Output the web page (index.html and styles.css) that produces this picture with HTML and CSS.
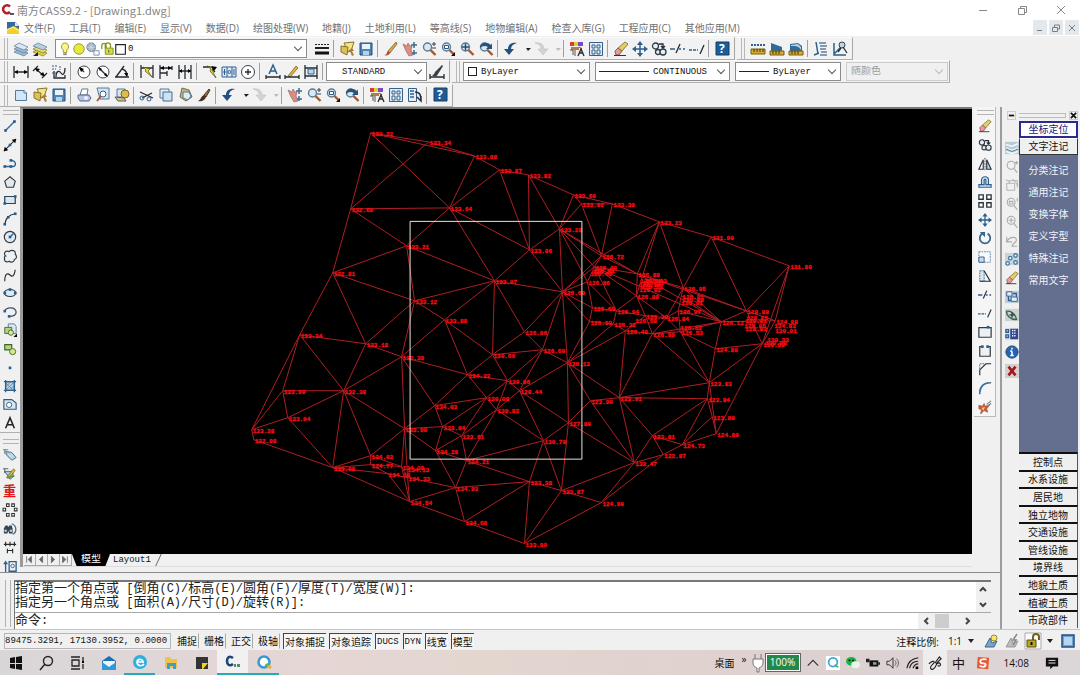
FILE: index.html
```html
<!DOCTYPE html>
<html lang="zh-CN">
<head>
    <meta charset="UTF-8">
    <meta name="viewport" content="width=device-width, initial-scale=1.0">
    <title>南方CASS9.2 - [Drawing1.dwg]</title>
    <link rel="stylesheet" href="styles.css">
</head>
<body>
    <div class="app">
        <header class="titlebar">
            <svg class="logo" viewBox="0 0 14 14"><path d="M9 3.5A4 4 0 1 0 9 9" fill="none" stroke="#b3202a" stroke-width="2.6"/><path d="M9 10h4v2H9z" fill="#556"/></svg>
            <span class="title">南方CASS9.2 - [Drawing1.dwg]</span>
            <div class="window-buttons">
                <button aria-label="最小化"><svg viewBox="0 0 10 10"><path d="M1 5.5h8"/></svg></button>
                <button aria-label="还原"><svg viewBox="0 0 10 10"><path d="M1.5 3.5h6v6h-6zM3.5 3.5v-2h6v6h-2"/></svg></button>
                <button aria-label="关闭"><svg viewBox="0 0 10 10"><path d="M1 1l8 8M9 1L1 9"/></svg></button>
            </div>
        </header>

        <nav class="menubar">
            <svg class="doc-icon" viewBox="0 0 14 14"><path d="M1 1h8l4 4v8H1z" fill="#f3cf2c"/><path d="M1 1h8l4 4v3L8 5 1 8z" fill="#2d6ca5"/><path d="M9 1v4h4z" fill="#dfeaf5"/><path d="M1 9l6-3 6 4" fill="none" stroke="#fff6b0"/></svg>
            <button>文件(F)</button>
            <button>工具(T)</button>
            <button>编辑(E)</button>
            <button>显示(V)</button>
            <button>数据(D)</button>
            <button>绘图处理(W)</button>
            <button>地籍(J)</button>
            <button>土地利用(L)</button>
            <button>等高线(S)</button>
            <button>地物编辑(A)</button>
            <button>检查入库(G)</button>
            <button>工程应用(C)</button>
            <button>其他应用(M)</button>
            <div class="doc-buttons">
                <button aria-label="最小化文档"><svg viewBox="0 0 10 10"><path d="M2 7.5h5"/></svg></button>
                <button aria-label="还原文档"><svg viewBox="0 0 10 10"><path d="M1.5 4.5h5v4h-5zM3.5 4v-2h5v4H7"/></svg></button>
                <button aria-label="关闭文档"><svg viewBox="0 0 10 10"><path d="M2 2l6 6M8 2L2 8"/></svg></button>
            </div>
        </nav>

        <section class="toolbars">
            <div class="toolbar-row">
                <div class="toolbar">
                    <div class="tools" data-icons="layers layerPrev"></div>
                    <label class="combo layer-combo">
                        <span class="layer-state" data-icons="bulb sun freeze unlock swatch"></span>
                        <select aria-label="图层"><option>0</option></select>
                    </label>
                    <div class="tools" data-icons="lineweight | open save | brush pan zoomRt zoomWin zoomAll zoomPrev | undo drop redo dropOff | props palette | erase move copy break1 break2 | help"></div>
                </div>
                <div class="toolbar">
                    <div class="tools" data-icons="dist area volume | list locate"></div>
                </div>
            </div>
            <div class="toolbar-row">
                <div class="toolbar">
                    <div class="tools" data-icons="dimLin dimAli dimOrd | dimRad dimDia dimAng | dimQuick dimBase dimCont | leader tolerance center | dimText dimEdit dimUpd |"></div>
                    <label class="combo style-combo"><select aria-label="标注样式"><option>STANDARD</option></select></label>
                    <div class="tools" data-icons="dimStyle"></div>
                </div>
                <div class="toolbar props-bar">
                    <label class="combo color-combo"><span class="swatch"></span><select aria-label="颜色"><option>ByLayer</option></select></label>
                    <label class="combo type-combo"><span class="rule rule-long"></span><select aria-label="线型"><option>CONTINUOUS</option></select></label>
                    <label class="combo weight-combo"><span class="rule"></span><select aria-label="线宽"><option>ByLayer</option></select></label>
                    <label class="combo plot-combo"><select aria-label="打印样式" disabled><option>随颜色</option></select></label>
                </div>
            </div>
            <div class="toolbar-row">
                <div class="toolbar">
                    <div class="tools" data-icons="new open save | print preview publish | cut copyClip paste match | undo drop redo dropOff | pan zoomRt zoomWin zoomPrev | props palette sheet | help"></div>
                </div>
            </div>
        </section>

        <main class="workspace">
            <div class="desk">
                <div class="drawing-row">
                    <aside class="draw-tools">
                        <div class="grip"></div>
                        <div class="tools vertical draw" data-icons="line xline pline polygon rect arc circle cloud spline ellipse ellArc insert block point hatch region text"></div>
                        <div class="grip"></div>
                        <div class="tools vertical cass" data-icons="tag tagEdit rebuild nodes find width attr"></div>
                    </aside>
                    <div class="drawing">
                        <svg class="canvas" id="canvas" viewBox="23 109 950 445" preserveAspectRatio="xMinYMin meet" role="img" aria-label="三角网"></svg>
                        <div class="sheet-tabs">
                            <button class="nav" aria-label="第一个"><svg viewBox="0 0 10 10"><path d="M2 1v8M8 1L4 5l4 4z"/></svg></button>
                            <button class="nav" aria-label="上一个"><svg viewBox="0 0 10 10"><path d="M7 1L3 5l4 4z"/></svg></button>
                            <button class="nav" aria-label="下一个"><svg viewBox="0 0 10 10"><path d="M3 1l4 4-4 4z"/></svg></button>
                            <button class="nav" aria-label="最后一个"><svg viewBox="0 0 10 10"><path d="M8 1v8M2 1l4 4-4 4z"/></svg></button>
                            <button class="sheet active">模型</button>
                            <button class="sheet">Layout1</button>
                            <span class="slash"></span>
                        </div>
                    </div>
                    <aside class="modify-tools">
                        <div class="modify-box">
                            <div class="grip"></div>
                            <div class="tools vertical modify" data-icons="erase copy mirror offset array move rotate scale stretch break1 break2 breakPt breakGap chamfer fillet explode"></div>
                        </div>
                    </aside>
                </div>

                <section class="command">
                    <div class="command-grip"></div>
                    <div class="command-box">
                        <div class="history">
                            <div class="history-text">
                                <p>指定第一个角点或<span> [</span>倒角<span>(C)/</span>标高<span>(E)/</span>圆角<span>(F)/</span>厚度<span>(T)/</span>宽度<span>(W)]:</span></p>
                                <p>指定另一个角点或<span> [</span>面积<span>(A)/</span>尺寸<span>(D)/</span>旋转<span>(R)]:</span></p>
                            </div>
                            <div class="scroll-v">
                                <svg viewBox="0 0 8 6"><path d="M1 5l3-3 3 3"/></svg>
                                <svg viewBox="0 0 8 6"><path d="M1 1l3 3 3-3"/></svg>
                            </div>
                        </div>
                        <div class="prompt">
                            <label for="cmd">命令<span>:</span></label>
                            <input id="cmd" type="text">
                            <div class="scroll-h">
                                <svg viewBox="0 0 6 8"><path d="M5 1L2 4l3 3"/></svg>
                                <span class="thumb"></span>
                                <svg viewBox="0 0 6 8"><path d="M1 1l3 3-3 3"/></svg>
                            </div>
                        </div>
                    </div>
                </section>
            </div>

            <aside class="side">
                <div class="side-head">
                    <button aria-label="折叠"><svg viewBox="0 0 8 8"><path d="M1 4h6"/></svg></button>
                    <span class="side-grip"></span>
                    <button aria-label="关闭面板"><svg viewBox="0 0 8 8"><path d="M1 1l6 6M7 1L1 7"/></svg></button>
                </div>
                <div class="side-body">
                    <div class="tools vertical snaps" data-icons="sLayer sZoom sWin sZoom2 sPlus sUndo sNodes erase sBlock sEdit sTable info close"></div>
                    <div class="side-menu">
                        <button class="head current">坐标定位</button>
                        <button class="head">文字注记</button>
                        <div class="sub">
                            <button>分类注记</button>
                            <button>通用注记</button>
                            <button>变换字体</button>
                            <button>定义字型</button>
                            <button>特殊注记</button>
                            <button>常用文字</button>
                        </div>
                        <div class="groups">
                            <button>控制点</button>
                            <button>水系设施</button>
                            <button>居民地</button>
                            <button>独立地物</button>
                            <button>交通设施</button>
                            <button>管线设施</button>
                            <button>境界线</button>
                            <button>地貌土质</button>
                            <button>植被土质</button>
                            <button>市政部件</button>
                        </div>
                    </div>
                </div>
            </aside>
        </main>

        <footer class="status">
            <span class="coords">89475.3291, 17130.3952, 0.0000</span>
            <div class="modes">
                <button>捕捉</button>
                <button>栅格</button>
                <button>正交</button>
                <button>极轴</button>
                <button class="on">对象捕捉</button>
                <button class="on">对象追踪</button>
                <button class="on latin">DUCS</button>
                <button class="on latin">DYN</button>
                <button class="on">线宽</button>
                <button class="on">模型</button>
            </div>
            <div class="status-right">
                <span>注释比例:</span>
                <button class="scale-btn">1:1 <i class="caret"></i></button>
                <div class="tools status-icons" data-icons="annoVis annoAuto lock"></div>
                <i class="caret"></i>
                <div class="tools" data-icons="clean"></div>
            </div>
        </footer>

        <div class="taskbar">
            <div class="tasks" data-icons="win search taskview mail browser folder note cass qq"></div>
            <div class="tray">
                <span class="desktop">桌面</span>
                <span class="more">»</span>
                <svg class="plug" viewBox="0 0 12 20"><path d="M3 1v5M9 1v5M1 6h10v4c0 3-2 4-4 5v4H5v-4c-2-1-4-2-4-5z" fill="#fff" stroke="#777"/></svg>
                <span class="battery">100%</span>
                <div class="tray-icons" data-icons="up qqTray wechat power speaker wifi pen"></div>
                <span class="ime">中</span>
                <div class="tray-icons" data-icons="sogou"></div>
                <time>14:08</time>
                <div class="tray-icons" data-icons="notice"></div>
            </div>
        </div>
    </div>
    <script src="script.js"></script>
</body>
</html>
```

FILE: styles.css
```css
* {
    margin: 0;
    padding: 0;
    box-sizing: border-box;
}

body {
    font-family: "Open Sans", "Noto Sans CJK SC", sans-serif;
    font-size: 10px;
    color: #222;
    background: #f0f0f0;
    overflow: hidden;
}

button,
select,
input {
    font: inherit;
    color: inherit;
    border: 0;
    background: none;
    white-space: nowrap;
}

svg {
    display: block;
}

.app {
    display: flex;
    flex-direction: column;
    height: 100vh;
}

/* title and menu */
.titlebar {
    display: flex;
    align-items: center;
    height: 19px;
    padding-left: 1px;
    background: #fff;
    color: #858585;
}

.logo {
    width: 14px;
    height: 14px;
    margin-right: 2px;
}

.title {
    font-family: "Noto Sans CJK SC", sans-serif;
    font-size: 11px;
    line-height: 18px;
}

.window-buttons {
    display: flex;
    margin-left: auto;
}

.window-buttons button {
    display: grid;
    place-items: center;
    width: 39px;
    height: 19px;
}

.window-buttons svg,
.doc-buttons svg {
    width: 10px;
    height: 10px;
    fill: none;
    stroke: #888;
}

.menubar {
    display: flex;
    align-items: center;
    gap: 14px;
    height: 17px;
    padding-left: 6px;
    background: #fff;
    color: #707070;
}

.menubar > button {
    line-height: 16px;
}

.doc-icon {
    width: 14px;
    height: 14px;
    margin-right: -10px;
}

.doc-buttons {
    display: flex;
    gap: 2px;
    margin-left: auto;
    padding-right: 1px;
}

.doc-buttons button {
    display: grid;
    place-items: center;
    width: 14px;
    height: 15px;
    background: #e4e8eb;
}

.doc-buttons svg {
    stroke: #71808c;
}

/* toolbars */
.toolbars {
    display: flex;
    flex-direction: column;
    height: 71px;
    padding-top: 1px;
}

.toolbar-row {
    display: flex;
    gap: 2px;
    height: 24px;
}

.toolbar {
    display: flex;
    align-items: center;
    height: 23px;
    padding: 0 3px 0 11px;
    border-right: 1px solid #a6a6a6;
    border-bottom: 1px solid #b0b0b0;
    border-top: 1px solid #fafafa;
    background: linear-gradient(#b8b8b8, #b8b8b8) 4px 0 / 1px 100% no-repeat,
        linear-gradient(#b8b8b8, #b8b8b8) 7px 0 / 1px 100% no-repeat, #f2f2f2;
}

.props-bar {
    padding-right: 1px;
}

.tools {
    display: flex;
    align-items: center;
}

.tool {
    display: grid;
    place-items: center;
    width: 19px;
    height: 19px;
}

.tool svg {
    width: 16px;
    height: 16px;
    overflow: visible;
}

.tool.narrow {
    width: 11px;
}

.sep {
    width: 1px;
    height: 17px;
    margin: 0 3px 0 2px;
    background: #a0a0a0;
}

.combo {
    position: relative;
    display: flex;
    align-items: center;
    height: 19px;
    border: 1px solid #8c8c8c;
    background: #fff;
    font-family: "Liberation Mono", "Noto Sans CJK SC", monospace;
    font-size: 9px;
    color: #111;
}

.combo select {
    flex: 1;
    min-width: 0;
    height: 17px;
    padding-left: 4px;
    appearance: none;
    outline: 0;
}

.combo::after {
    content: "";
    position: absolute;
    right: 5px;
    top: 4px;
    width: 5px;
    height: 5px;
    border: solid #555;
    border-width: 0 1px 1px 0;
    transform: rotate(45deg);
}

.layer-combo {
    width: 252px;
    margin: 0 5px 0 6px;
    padding-left: 2px;
}

.layer-combo select {
    padding-left: 0;
}

.layer-state {
    display: flex;
}

.layer-state svg {
    width: 14px;
    height: 14px;
}

.style-combo {
    width: 101px;
}

.style-combo select {
    padding-left: 15px;
}

.color-combo {
    width: 127px;
    padding-left: 4px;
}

.type-combo,
.weight-combo,
.plot-combo {
    margin-left: 5px;
}

.type-combo {
    width: 135px;
}

.weight-combo {
    width: 106px;
}

.plot-combo {
    width: 102px;
    border-color: #ccc;
    background: #f0f0f0;
    font-size: 10px;
    color: #777;
}

.plot-combo::after {
    border-color: #bbb;
}

.swatch {
    width: 9px;
    height: 9px;
    border: 1px solid #222;
}

.rule {
    width: 30px;
    height: 1px;
    margin-left: 3px;
    background: #222;
}

.rule-long {
    width: 50px;
}

/* workspace */
.workspace {
    display: flex;
    flex: 1;
    min-height: 0;
}

.desk {
    display: flex;
    flex: 1;
    flex-direction: column;
    min-width: 0;
}

.drawing-row {
    display: flex;
    flex: 1;
    min-height: 0;
    border-bottom: 1px solid #8a8a8a;
}

.draw-tools {
    width: 20px;
    padding-top: 3px;
    overflow: hidden;
}

.grip {
    height: 5px;
    margin: 0 1px 2px 3px;
    border: solid #b4b4b4;
    border-width: 1px 0;
}

.vertical {
    flex-direction: column;
}

.vertical .tool {
    flex: 1;
    min-height: 0;
}

.vertical .tool svg {
    width: 14px;
    height: 14px;
}

.draw {
    height: 316px;
    margin-bottom: 6px;
    border-bottom: 1px solid #b0b0b0;
}

.cass {
    height: 129px;
}

.drawing {
    display: flex;
    flex: 1;
    flex-direction: column;
    min-width: 0;
    border-left: 3px solid #9a9a9a;
    border-top: 2px solid #777;
    margin-bottom: 5px;
}

.canvas {
    flex: 1;
    width: 100%;
    min-height: 0;
    background: #000;
}

.mesh {
    fill: none;
    stroke: #b01e22;
    stroke-width: 1;
}

.window-box {
    fill: none;
    stroke: #e8e4dc;
    stroke-width: 1;
}

.labels {
    font-family: "Liberation Mono", monospace;
    font-size: 6px;
    font-weight: bold;
    fill: #ff0a10;
    stroke: #f40d12;
    stroke-width: 0.3;
}

.sheet-tabs {
    display: flex;
    height: 13px;
    padding-left: 1px;
    border-bottom: 1px solid #ddd;
}

.nav {
    width: 12px;
    height: 12px;
    padding: 1px;
    border: solid #aaa;
    border-width: 0 1px 1px 0;
}

.nav svg {
    width: 8px;
    height: 9px;
    fill: #666;
    stroke: #666;
}

.sheet {
    padding: 0 3px;
    font-family: "Liberation Mono", "Noto Sans CJK SC", monospace;
    font-size: 9px;
    line-height: 12px;
    color: #111;
}

.sheet.active {
    width: 38px;
    background: #000;
    color: #fff;
    font-size: 10px;
    clip-path: polygon(0 0, 100% 0, 88% 100%, 12% 100%);
}

.slash {
    width: 1px;
    height: 12px;
    margin-left: 4px;
    background: #666;
    transform: skewX(-25deg);
}

.modify-tools {
    width: 28px;
    padding: 0 4px 0 2px;
}

.modify-box {
    padding-top: 3px;
    border: solid #b8b8b8;
    border-width: 0 1px 1px 0;
    background: #f5f5f5;
}

.modify {
    height: 299px;
}

/* command line */
.command {
    display: flex;
    height: 56px;
    padding: 7px 9px 0 5px;
    font-family: "Liberation Mono", "Noto Sans CJK SC", monospace;
    color: #222;
}

.command-grip {
    width: 6px;
    height: 47px;
    margin-right: 3px;
    border: solid #b0b0b0;
    border-width: 0 1px;
}

.command-box {
    display: flex;
    flex: 1;
    flex-direction: column;
    min-width: 0;
    border: solid #777;
    border-width: 2px 0 0 1px;
    background: #fff;
}

.history {
    display: flex;
    flex: 1;
    justify-content: space-between;
    border-bottom: 1px solid #a8a8a8;
}

.history p,
.prompt label {
    font-size: 13px;
    line-height: 14px;
    white-space: nowrap;
}

.history span,
.prompt label span {
    font-size: 12px;
}

.scroll-v {
    display: flex;
    flex-direction: column;
    justify-content: space-between;
    width: 15px;
    padding: 4px 3px;
    background: #f0f0f0;
}

.scroll-v svg {
    width: 8px;
    height: 6px;
}

.scroll-v svg,
.scroll-h svg {
    fill: none;
    stroke: #444;
    stroke-width: 2;
}

.prompt {
    display: flex;
    align-items: center;
    height: 16px;
}

.prompt input {
    flex: 1;
    min-width: 0;
    height: 14px;
    padding-left: 4px;
    font-size: 12px;
    outline: 0;
}

.scroll-h {
    display: flex;
    align-items: center;
    gap: 6px;
    width: 73px;
    height: 16px;
    padding-left: 5px;
    background: #f0f0f0;
}

.scroll-h svg {
    width: 6px;
    height: 8px;
}

.thumb {
    width: 14px;
    height: 14px;
    margin-right: 10px;
    background: #cdcdcd;
}

/* side palette */
.side {
    display: flex;
    flex-direction: column;
    width: 80px;
    padding: 2px 2px 1px 2px;
    border-left: 2px solid #9c9c9c;
}

.side-head {
    display: flex;
    align-items: center;
    gap: 3px;
    height: 12px;
    padding: 0 0 0 3px;
}

.side-head button {
    width: 9px;
    height: 9px;
    border: 1px solid #ccc;
}

.side-head svg {
    width: 7px;
    height: 7px;
    stroke: #111;
    stroke-width: 2;
}

.side-grip {
    flex: 1;
    height: 5px;
    border: 1px solid #bbb;
    border-left: 0;
}

.side-body {
    display: flex;
    flex: 1;
    min-height: 0;
}

.snaps {
    width: 15px;
    height: 241px;
    margin-top: 18px;
    background: #f0f0f0;
}

.side-menu {
    display: flex;
    flex: 1;
    flex-direction: column;
    background: linear-gradient(#f0f0f0, #f0f0f0) 0 0 / 100% 17px no-repeat, #646f90;
}

.side-menu .head {
    height: 17px;
    border: 1px solid #333;
    border-top-color: #fff;
    background: #efefef;
    color: #111;
    line-height: 15px;
}

.side-menu .current {
    border: 2px solid #2b2a92;
    background: #fff;
    color: #17167c;
    line-height: 13px;
}

.sub {
    display: flex;
    flex: 1;
    flex-direction: column;
    padding-top: 3px;
}

.sub button {
    height: 22px;
    color: #f3f4f8;
}

.groups {
    display: flex;
    flex-direction: column;
    height: 176px;
}

.groups button {
    flex: 1;
    min-height: 0;
    border-top: 2px solid #111;
    border-right: 1px solid #555;
    background: #efefef;
    color: #111;
    line-height: 14px;
}

/* status bar */
.status {
    display: flex;
    align-items: center;
    height: 21px;
    padding: 2px 3px 0 4px;
    border-top: 1px solid #c6c6c6;
    color: #111;
}

.coords {
    width: 167px;
    height: 16px;
    border: 1px solid #b5b5b5;
    font-family: "Liberation Mono", monospace;
    font-size: 9px;
    line-height: 14px;
    white-space: nowrap;
}

.modes {
    display: flex;
    gap: 3px;
    padding-left: 4px;
}

.modes button {
    height: 16px;
    padding: 0 1px;
    border: 1px solid #f0f0f0;
    border-right-color: #aaa;
    line-height: 14px;
}

.modes .on {
    border: solid #444;
    border-width: 1px 0 0 1px;
    background: #f6f6f6;
}

.modes .latin {
    font-family: "Liberation Mono", monospace;
    font-size: 9px;
}

.status-right {
    display: flex;
    align-items: center;
    gap: 5px;
    margin-left: auto;
}

.scale-btn {
    display: flex;
    align-items: center;
    gap: 6px;
    margin-left: 4px;
}

.caret {
    border: 3px solid transparent;
    border-top: 4px solid #222;
    border-bottom: 0;
}

.status-icons {
    gap: 2px;
    margin-left: 2px;
}

/* taskbar */
.taskbar {
    display: flex;
    align-items: stretch;
    justify-content: space-between;
    height: 25px;
    background: linear-gradient(90deg, #d9d6d8, #e6d6d6 28%, #e3d6cf 45%, #ddd0d0 75%, #dcd6d8);
}

.tasks {
    display: flex;
}

.task {
    display: grid;
    place-items: center;
    width: 31px;
}

.task svg {
    width: 16px;
    height: 16px;
}

.task.running {
    border-bottom: 2px solid #28a9b8;
}

.task.focused {
    background: #f3f0f1;
}

.tray {
    display: flex;
    align-items: center;
    padding-right: 18px;
    color: #111;
}

.desktop {
    margin-right: 7px;
}

.more {
    height: 22px;
    margin-right: 5px;
    line-height: 14px;
}

.plug {
    width: 12px;
    height: 20px;
    margin-right: 1px;
}

.battery {
    width: 36px;
    height: 19px;
    margin-right: 2px;
    border: 2px solid #fff;
    outline: 1px solid #666;
    outline-offset: -1px;
    background: #23884a;
    color: #fff;
    line-height: 15px;
    text-align: center;
}

.tray-icons {
    display: flex;
    align-items: center;
}

.tray-icons .tray-item {
    display: grid;
    place-items: center;
    width: 20px;
    height: 25px;
}

.tray-icons .wide {
    width: 24px;
}

.tray-icons .lit {
    background: #efecee;
}

.tray-icons svg {
    width: 14px;
    height: 14px;
}

.ime {
    width: 24px;
    font-size: 13px;
    line-height: 20px;
    text-align: center;
}

.tray time {
    margin: 0 13px 0 9px;
}
```

FILE: script.js
```js
// Icon shapes, all on a 16 x 16 grid
const sheetShape = '<path d="M2.5 3.5h9l2 2v8h-11z" fill="#d4e6f3" stroke="#55799a"/>';
const lens = '<circle cx="6.5" cy="6" r="4" fill="#d9e9f4" stroke="#5b7b96" stroke-width="1.4"/><path d="M9.5 9l5 5" stroke="#a8572c" stroke-width="2.4"/>';
const greyLens = '<g fill="none" stroke="#aaa" stroke-width="1.2"><circle cx="7" cy="6" r="4.5"/><path d="M10 9.5l4 5"/>';
const pencil = '<path d="M4 12l8-10 2 2-8 9z" fill="#e0b43a" stroke="#74521c" stroke-width=".7"/>';
const k = (d) => `<path d="${d}" fill="none" stroke="#262b30" stroke-width="1.3"/>`;
const b = (d) => `<path d="${d}" fill="none" stroke="#2c608f" stroke-width="1.5"/>`;
const dots = (list) => list.map(([x, y]) => `<rect x="${x - 1.5}" y="${y - 1.5}" width="3" height="3" fill="#255d92"/>`).join('');

const icons = {
    layers: '<g fill="#9db8d4" stroke="#5a7b9c" stroke-width=".7"><path d="M1 11l5-3 9 4-4 3z"/><path d="M1 8l5-3 9 4-4 3z"/><path d="M1 5l5-3 9 4-4 3z" fill="#dbe8f3"/></g>',
    layerPrev: '<g stroke-width=".7"><path d="M1 11l5-3 9 4-4 3z" fill="#dfcf4e" stroke="#837520"/><path d="M1 8l5-3 9 4-4 3z" fill="#e8db6d" stroke="#837520"/><path d="M1 5l5-3 9 4-4 3z" fill="#b8cfe2" stroke="#5a7b9c"/></g><path d="M1 15l5-4v4z" fill="#222"/>',
    bulb: '<path d="M8 1a4.3 4.3 0 0 0-2 8v3h4V9a4.3 4.3 0 0 0-2-8z" fill="#fbf48a" stroke="#998e28"/><path d="M6 13h4v2H6z" fill="#7a8590"/>',
    sun: '<circle cx="8" cy="8" r="6" fill="#e6ea3b" stroke="#8d9122"/>',
    freeze: '<circle cx="6" cy="6" r="5" fill="#9db1c4" stroke="#667d92"/><path d="M3 3l6 6M9 3L3 9M6 1v10M1 6h10" stroke="#dfe8ef" stroke-width=".7"/><path d="M9 10h6v5H9z" fill="#fff" stroke="#6c86a0"/>',
    unlock: '<path d="M2 8V4a2 2 0 0 1 5 0v3M6 7V4a3 3 0 0 1 6 0v3" fill="none" stroke="#85951d" stroke-width="1.5"/><path d="M6 7h9v7H6z" fill="#d3df3f" stroke="#7d8a1a"/><path d="M10 9v3" stroke="#444"/>',
    swatch: '<path d="M2 3h11v11H2z" fill="#fff" stroke="#222" stroke-width="1.3"/>',
    lineweight: '<path d="M1 3.5h14" stroke="#222" stroke-dasharray="2 1"/><path d="M1 7h14" stroke="#222" stroke-width="2"/><path d="M1 12h14" stroke="#111" stroke-width="3"/>',
    new: sheetShape + '<path d="M11 3v3h3" fill="#fff" stroke="#55799a"/>',
    open: '<path d="M5 2l10-1-3 9-3 1z" fill="#f3e38a" stroke="#8c7426"/><path d="M2 5l7 1-1 8-6-3z" fill="#dcc05a" stroke="#8c7426"/><path d="M13 7l-4 3h2l2 5 2-1-2-4h2z" fill="#a77f38"/>',
    save: '<path d="M2 2h12v12H2z" fill="#4c86b6" stroke="#234e77"/><path d="M4 3h8v5H4z" fill="#e8f2f8"/><path d="M5 10h6v4H5z" fill="#b8d1e4"/>',
    brush: '<path d="M5 10l8-9 1 2-7 9z" fill="#d9a443" stroke="#7e561f" stroke-width=".7"/><path d="M1 14c4 0 2-3 4-4l2 2c-1 2-3 3-6 2z" fill="#b5492e"/>',
    pan: '<path d="M1 3l4 2 1-3 2 3 2 0-1 4 2 5-4 1-3-5z" fill="#d98d85" stroke="#9c6763" stroke-width=".7"/><path d="M12 1v6M9 4h6M12 9v5M10 12h5" stroke="#3a6d8e" stroke-width="1.5"/>',
    zoomRt: lens + '<path d="M13 1v4M11 3h4M11 7h4" stroke="#345"/>',
    zoomWin: lens + '<path d="M4.5 4.5h4v3h-4z" fill="#fff" stroke="#2d577d"/><path d="M15 11v4h-4z" fill="#111"/>',
    zoomAll: lens + '<path d="M6.5 2.5v7M3 6h7" stroke="#2d4b67" stroke-width="1.5"/>',
    zoomPrev: lens + '<path d="M2 7c0-5 6-7 11-3l1-2v6H8l2-2C7 4 4 5 2 7z" fill="#26547d"/>',
    undo: '<path d="M14 2C9 1 5 3 5 8H1l5 6 5-6H8c0-3 2-5 6-6z" fill="#24507d"/>',
    redo: '<path d="M2 2c5-1 9 1 9 6h4l-5 6-5-6h3c0-3-2-5-6-6z" fill="#d3d3d3" stroke="#bbb" stroke-width=".5"/>',
    drop: '<path d="M6 7h5L8 10z" fill="#222"/>',
    dropOff: '<path d="M6 7h5L8 10z" fill="#bbb"/>',
    props: '<path d="M1 1h4v4H1z" fill="#d23c3c"/><path d="M5 1h4v4H5z" fill="#e4cf31"/><path d="M9 1h5v4H9z" fill="#7a4ac0"/><path d="M2 6h8v3H2z" fill="#b87848"/><path d="M1 9h3v5M6 9v6M10 6l3 2" stroke="#555" fill="none"/>' + k('M9 15l3-7 3 7M10 12h4'),
    palette: '<path d="M1.5 1.5h13v13h-13z" fill="#e4edf5" stroke="#34608b"/><g fill="none" stroke="#34608b"><path d="M4 4h3v3H4zM9 4h3v3H9zM4 9h3v4H4zM9 9h3v4H9z"/></g>',
    sheet: '<path d="M1.5 1.5h8v13h-8z" fill="#e4edf5" stroke="#34608b"/><path d="M3 4h4M3 7h4M3 10h4" stroke="#34608b" stroke-width="1.5"/><path d="M8 5c5 0 6 3 6 9l-4-4M14 14V9" fill="none" stroke="#2a2f35" stroke-width="1.5"/>',
    erase: '<path d="M2 10l3-3 4 3-3 4H3z" fill="#e79b9b" stroke="#7a4544" stroke-width=".8"/><path d="M5 7l7-6 3 2-6 7z" fill="#e2cf65" stroke="#726229" stroke-width=".8"/><path d="M1 14.5h12" stroke="#333"/>',
    move: b('M8 2v12M2 8h12') + '<path d="M8 0l3 4H5zM8 16l3-4H5zM0 8l4-3v6zM16 8l-4-3v6z" fill="#2c608f"/>',
    copy: '<g fill="#e8eef3" stroke="#303b46" stroke-width="1.3"><circle cx="4.5" cy="5" r="3"/><circle cx="7" cy="11" r="2.5"/><circle cx="12" cy="11" r="3"/></g>' + k('M8 3h4v3M10 5l2 2 2-2'),
    break1: b('M0 8h5M9 8h2M13 8h2') + k('M6 12l4-9'),
    break2: '<path d="M0 9h9" stroke="#2c608f" stroke-width="1.5" stroke-dasharray="3 1"/>' + k('M11 13l4-9'),
    help: '<path d="M2 1h13v13H2z" fill="#1d5c96" stroke="#153e68"/><text x="5" y="12" font-size="12" font-weight="bold" fill="#fff">?</text>',
    dist: '<path d="M1 4h14" stroke="#315f91" stroke-width="2" stroke-dasharray="2 1"/><path d="M1 8h14v5H1z" fill="#d5ac2f" stroke="#765c16"/><path d="M4 8v3M7 8v3M10 8v3M13 8v3" stroke="#3d3110"/>',
    area: '<path d="M2 2l11 4v5H2z" fill="#2f6a9b"/><path d="M1 10h14v4H1z" fill="#d5ac2f" stroke="#765c16"/><path d="M4 10v3M7 10v3M10 10v3" stroke="#3d3110"/>',
    volume: '<path d="M2 3l8-1 4 3v6H2z" fill="#2f6a9b"/><path d="M3 4l7-1 3 3v3c-2-4-5-4-10-4z" fill="#b9d3e5"/><path d="M1 10h14v4H1z" fill="#d5ac2f" stroke="#765c16"/><path d="M4 10v3M7 10v3M10 10v3" stroke="#3d3110"/>',
    list: b('M3 1l2 12M1 14l5-2') + '<path d="M6 2h7M7 5h7M7 8h6M8 11h6M7 14h7" stroke="#5f7d9b" stroke-width="1.5"/>',
    locate: b('M2 2v12h12M2 13l8-8') + '<circle cx="10" cy="4" r="3" fill="#c0d6e6" stroke="#39444e"/>' + k('M11 6l4 6M9 7l-3 4'),
    dimLin: k('M1 2v12M15 2v12M2 8h12') + '<path d="M1 8l4-2v4zM15 8l-4-2v4z"/>',
    dimAli: k('M4 5l8 7M1 7l5-5M10 14l5-5') + '<path d="M3 4l5 1-3 3zM13 12l-5-1 3-3z"/>',
    dimOrd: k('M3 7v7h11v-3M5 13c0-6 3-7 5-4s4 1 4-5') + '<path d="M1 2h6M1 5h4M1 9h4M9 2v4" stroke="#315f91" stroke-dasharray="2 1"/>',
    dimRad: '<circle cx="8" cy="8" r="6" fill="#fff" stroke="#3b4248"/>' + k('M8 8L4 4') + '<path d="M3 3l5 2-3 3z"/>',
    dimDia: '<circle cx="8" cy="8" r="6" fill="#fff" stroke="#3b4248"/>' + k('M4 4l8 8') + '<path d="M3 3l4 2-2 2zM13 13l-4-2 2-2z"/>',
    dimAng: k('M1 13h14M2 13l8-11M8 5c4 1 5 4 5 7') + '<path d="M13 13l-3-4h4z"/>',
    dimQuick: k('M2 1v13M14 1v13M2 4h12') + '<path d="M4 3l7 2-2 2 4 6-7-6 1-1z" fill="#e5df26" stroke="#4e4b16" stroke-width=".7"/>',
    dimBase: k('M2 1v14M2 4h12M2 9h7M14 2v4M9 7v5') + '<path d="M2 4l4-2v4zM14 4l-4-2v4z"/>',
    dimCont: k('M2 1v14M8 1v14M14 1v14M2 7h12') + '<path d="M2 7l3-2v4zM14 7l-3-2v4z"/>',
    leader: k('M1 3h7l5 5') + '<path d="M5 2l6 2-1 2 4 8-6-7 1-2z" fill="#e5df26" stroke="#4e4b16" stroke-width=".7"/><path d="M15 3l-6-1 3 5z"/>',
    tolerance: '<path d="M1 3h14v10H1z" fill="#dfeaf4" stroke="#315f91"/><path d="M6 3v10M11 3v10M3.5 5v6M2 8h3" stroke="#315f91"/><circle cx="8.5" cy="8" r="1.5" fill="none" stroke="#315f91"/><path d="M13 5v6" stroke="#315f91"/>',
    center: '<circle cx="8" cy="8" r="6.5" fill="#fff" stroke="#3b4248"/>' + k('M8 5v6M5 8h6'),
    dimText: b('M4 10l4-9 4 9M5 7h6') + k('M1 11v4M15 11v4M1 13h14'),
    dimEdit: pencil + k('M1 11v4M15 11v4M1 13h14'),
    dimUpd: k('M2 1v14M14 1v14M2 12h12M2 4h12') + '<path d="M5 5h6v5H5z" fill="#c0d7e8" stroke="#2c608f"/>',
    dimStyle: '<path d="M3 11c3 0 2-3 4-4l6-6 1 1-5 8c-1 3-4 3-6 1z" fill="#3b3f42"/>' + k('M1 10v5M15 10v5M1 13h14'),
    print: '<path d="M4 8l2-6h6l-1 6z" fill="#fff" stroke="#66768c"/><path d="M2 8h11l2 3-2 3H4l-2-3z" fill="#b9c2df" stroke="#596789"/><circle cx="10" cy="11" r="2" fill="#eef"/>',
    preview: '<path d="M2 1h12v11H5z" fill="#d4e6f3" stroke="#55799a"/><circle cx="8" cy="7" r="3" fill="#fff" stroke="#3e6484"/><path d="M6 9l-4 5" stroke="#a8572c" stroke-width="2"/>',
    publish: '<path d="M3 2h8v8H3z" fill="#d4e6f3" stroke="#55799a"/><circle cx="11" cy="7" r="4" fill="#e0bd4a" stroke="#7e6420"/><path d="M1 10l9 1 2 3H4z" fill="#c9c1a3" stroke="#665c3a"/>',
    cut: k('M1 5l13 6M3 11l10-5') + '<circle cx="3" cy="11" r="2" fill="none" stroke="#2c608f"/><circle cx="10" cy="12" r="2" fill="none" stroke="#2c608f"/>',
    copyClip: '<path d="M2 2h9v9H2z" fill="#e2edf5" stroke="#55799a"/><path d="M5 5h9v9H5z" fill="#cfe2f0" stroke="#466d90"/>',
    paste: '<path d="M5 1l7 2 3 7-6 4-6-4z" fill="#c4b584" stroke="#7a6b40"/><path d="M6 5h6l2 4-3 4-5-2z" fill="#dfebf4" stroke="#55799a"/>',
    match: '<path d="M8 8l5-6 1 1-4 7z" fill="#8a6a48" stroke="#4e3a25"/><path d="M2 14c3-1 3-5 6-6l2 2c-1 3-4 5-8 4z" fill="#4a3020"/>',
    line: b('M2 14L14 2') + dots([[3, 13], [13, 3]]),
    xline: k('M1 15L15 1') + '<path d="M1 15l1-5 4 4zM15 1l-1 5-4-4z"/>' + dots([[8, 8]]),
    pline: b('M2 12h9c5 0 4-7-2-7') + dots([[2, 12], [9, 12], [9, 5]]),
    polygon: '<path d="M8 2l6 5-2 7H4L2 7z" fill="#e3e8ed" stroke="#333b43" stroke-width="1.3"/>',
    rect: '<path d="M2 4h12v8H2z" fill="#d9e7f2" stroke="#333f4b" stroke-width="1.4"/>' + dots([[2, 12], [14, 4]]),
    arc: k('M2 14C3 7 7 3 14 2') + dots([[2, 14], [6, 6], [14, 2]]),
    circle: '<circle cx="8" cy="8" r="6.5" fill="#dceaf4" stroke="#333b43" stroke-width="1.3"/>' + b('M8 8l4-4') + dots([[8, 8]]),
    cloud: '<path d="M3 8C0 5 3 1 7 3c3-3 8-1 7 3 2 2 2 5-1 6 0 3-4 4-6 2-4 2-6-1-5-3-1-1 0-3 1-3z" fill="#edf1f4" stroke="#333b43" stroke-width="1.3"/>',
    spline: k('M2 15c0-8 3-10 6-7s5 1 6-6'),
    ellipse: '<ellipse cx="8" cy="8" rx="6.5" ry="4" fill="#dceaf4" stroke="#333b43" stroke-width="1.3"/>' + dots([[2, 8], [8, 4], [14, 8]]),
    ellArc: '<path d="M2 7c2-5 12-5 13 1 0 4-4 5-8 5" fill="none" stroke="#3d556b" stroke-width="1.5"/>' + dots([[2, 7], [7, 13]]),
    insert: '<path d="M6 1h7l2 3v8H6z" fill="#dce8f2" stroke="#557998"/><path d="M2 5h8v7H2z" fill="#b5d28a" stroke="#3c6629"/><circle cx="9" cy="11" r="3" fill="#d9e5a8" stroke="#3c6629"/><path d="M16 12v4h-4z"/>',
    block: '<path d="M2 3h8v6H2z" fill="#b5d28a" stroke="#3c6629" stroke-width="1.3"/><circle cx="11" cy="11" r="3.5" fill="#d7e88c" stroke="#3c6629"/>',
    point: dots([[8, 9]]),
    hatch: '<path d="M3 3h10v10H3z" fill="#bcd3e5" stroke="#2c608f" stroke-width="1.5"/><path d="M4 8l4-4M4 12l8-8M8 12l4-4M4 5l7 7" stroke="#6589a8"/>' + b('M1 3h14M1 13h14M3 1v14M13 1v14'),
    region: '<path d="M1 3h9l5 4v7H1z" fill="#d9e7f2" stroke="#315a7d" stroke-width="1.3"/><circle cx="7" cy="9" r="3" fill="#fff" stroke="#315a7d"/>',
    text: '<path d="M3 14L8 2l5 12M5 10h6" fill="none" stroke="#222" stroke-width="1.8"/>',
    tag: '<path d="M3 4l7 1 5 6-5 3-6-6z" fill="#a8cbdc" stroke="#3f6c84"/><path d="M0 2h6M2 2v5" stroke="#576"/><path d="M6 7l5 5M8 6l5 5" stroke="#e8f4fa"/>',
    tagEdit: '<path d="M2 5h9l1 6-4 3z" fill="#a8cbdc" stroke="#3f6c84"/><path d="M0 2h6M2 2v5" stroke="#456"/>' + pencil + '<path d="M5 12l8-2" stroke="#4a9a38" stroke-width="1.5"/>',
    rebuild: '<text x="0" y="13" font-size="15" font-weight="bold" fill="#e0161a">重</text>',
    nodes: '<g fill="#fff" stroke="#333" stroke-width="1.2"><path d="M4 1h3v3H4zM10 1h3v3h-3zM0 6h3v3H0zM13 6h3v3h-3zM4 12h3v3H4zM10 12h3v3h-3z"/></g>',
    find: '<path d="M1 7l2-3h2l1 2 1-2h3l1 4v5H7l-1-3-1 3H1z" fill="#374350"/><circle cx="3" cy="10" r="1.5" fill="#bcd"/><circle cx="9" cy="10" r="1.5" fill="#bcd"/><path d="M10 2c6 2 6 10 1 12" stroke="#446b92" fill="none" stroke-width="1.5"/>',
    width: k('M1 5h14M3 2v5M8 2v5M13 2v5M5 10v5M11 10v5M5 12h6'),
    attr: b('M3 15V4M1 6l2-3 2 3M7 3h8v11H7z') + '<circle cx="11" cy="8" r="2" fill="none" stroke="#2c608f"/>',
    mirror: '<path d="M6 3v11H1z" fill="#fff" stroke="#29323b" stroke-width="1.3"/><path d="M10 3v11h5z" fill="#b9d1e3" stroke="#29323b" stroke-width="1.3"/><path d="M8 1v14" stroke="#29323b" stroke-dasharray="2 1"/>',
    offset: '<path d="M1 14v-3h3V6a4 4 0 0 1 8 0v5h3v3z" fill="#cfe0ed" stroke="#2c608f" stroke-width="1.3"/><path d="M4 11h3V6a1 1 0 0 1 2 0v5h3" fill="none" stroke="#2c608f" stroke-width="1.3"/>',
    array: '<g fill="#fff" stroke="#29323b" stroke-width="1.5"><path d="M1 1h5v5H1zM10 1h5v5h-5zM1 10h5v5H1zM10 10h5v5h-5z"/></g>',
    rotate: '<path d="M5 3a6 6 0 1 0 6 0" fill="none" stroke="#3a668e" stroke-width="2"/><path d="M2 1h6v6z" fill="#3a668e"/>',
    scale: '<path d="M1 2h13v12H1z" fill="#f6fafd" stroke="#537ca0" stroke-dasharray="2 1"/><path d="M1 8h6v6H1z" fill="#c8dbea" stroke="#2c5880"/>',
    stretch: '<path d="M2 2h5v12H2z" fill="#d9e7f2" stroke="#2c608f" stroke-dasharray="2 1"/>' + k('M7 2l7 12H2'),
    breakPt: '<path d="M1 3h14v11H1z" fill="#edf1f4" stroke="#333b43" stroke-width="1.4"/><path d="M10 1h3v3h-3z" fill="#2c608f"/>',
    breakGap: '<path d="M5 3H2v11h12V3h-3" fill="#edf1f4" stroke="#333b43" stroke-width="1.4"/>' + dots([[5, 3], [11, 3]]),
    chamfer: k('M2 15V9l7-7h6') + '<path d="M2 8V2h6" stroke="#2c608f" fill="none" stroke-dasharray="2 1"/>',
    fillet: k('M2 15c0-8 3-13 13-13') + '<path d="M2 12C3 6 6 3 12 2" stroke="#377ab2" fill="none" stroke-width="2"/>',
    explode: '<path d="M1 6l4 1 2-3 1 3 5-1-3 4 1 4-4-2-4 4 1-5-3-1z" fill="#d5573a" stroke="#86543a" stroke-width=".7"/><path d="M4 9l4-1-2 4z" fill="#f8d666"/><path d="M10 5l5-4M12 6l3-2" stroke="#777" stroke-width="1.2"/>',
    sLayer: '<path d="M0 1h16v14H0z" fill="#b9c9d3"/><path d="M1 4l7 2 7-3M1 8l7 3 7-3M1 12l7 2 7-2" fill="none" stroke="#edf6fa" stroke-width="2"/><path d="M1 9l7 3 7-3" fill="none" stroke="#477290"/>',
    sZoom: greyLens + '<path d="M13 1v4M11 3h4"/></g>',
    sWin: '<g fill="none" stroke="#aaa"><path d="M2 6h9v8H2zM5 3h9v8M5 3v3M1 2l4 2M9 1l6 8"/></g>',
    sZoom2: greyLens + '<path d="M5 5h4v3H5zM14 1v4"/></g>',
    sPlus: greyLens + '<path d="M7 3v6M4 6h6"/></g>',
    sUndo: '<path d="M2 3v6h6M2 9c3-6 11-7 11-2 0 3-4 3-5 7h6" fill="none" stroke="#aaa" stroke-width="1.3"/>',
    sNodes: '<path d="M0 1h16v14H0z" fill="#c5d5df"/><g fill="#eef6fb" stroke="#477a9f" stroke-width="1.5"><circle cx="12" cy="4" r="2"/><circle cx="6" cy="7" r="2"/><circle cx="3" cy="13" r="2"/><circle cx="12" cy="12" r="2"/></g>',
    sBlock: '<path d="M0 1h16v14H0z" fill="#bfcdda"/><path d="M2 2h6v5H2zM7 8h7v5H7z" fill="#e5eef6" stroke="#2c588a"/>' + b('M4 7v5h3M9 4h4v4'),
    sEdit: '<path d="M0 1h16v14H0z" fill="#c9d3cf"/><path d="M1 4c6-2 12 4 12 10M2 3c-1 5 4 11 12 10" fill="none" stroke="#376454" stroke-width="1.5"/>' + k('M5 8h6M8 5v6'),
    sTable: '<path d="M0 1h16v14H0z" fill="#d9e0ea"/><path d="M6 2h9v12H6z" fill="#35458d"/><path d="M8 4h5M8 7h5M8 10h5" stroke="#fff" stroke-width="1.5" stroke-dasharray="1.5 1"/>' + b('M1 3h3v3H1zM1 9h3v3H1z'),
    info: '<circle cx="8" cy="8" r="7" fill="#2364b5" stroke="#163e79"/><path d="M8 7v5M6 12h4M6 7h2M8 3v2" stroke="#fff" stroke-width="1.8"/>',
    close: '<path d="M0 0h16v16H0z" fill="#d4cfcd"/><path d="M4 3l8 10M12 3L4 13" stroke="#a31620" stroke-width="3"/>',
    annoVis: '<path d="M2 14l5-9 2 5 5-2-3 6z" fill="#7da4c7" stroke="#3b668c"/><circle cx="11" cy="5" r="3" fill="#f3e869" stroke="#968b2b"/>',
    annoAuto: '<path d="M2 14l5-9 2 5 5-2-3 6z" fill="#bbb" stroke="#999"/><path d="M13 1L9 7h3l-3 5" stroke="#888" fill="none" stroke-width="1.5"/>',
    lock: '<path d="M0 0h16v16H0z" fill="#fafafa" stroke="#aaa"/><path d="M8 8V4a3 3 0 0 1 6 0v3" fill="none" stroke="#6f641e" stroke-width="2"/><path d="M2 7h9v7H2z" fill="#bba724" stroke="#5a500f"/><path d="M6.5 9v3" stroke="#111" stroke-width="2"/>',
    clean: '<path d="M2 2h12v12H2z" fill="#6fa5d6" stroke="#234e7d" stroke-width="1.5"/><path d="M4 4h8v8H4z" fill="#b5d6ee"/>',
    win: '<path d="M2 3l5-1v6H2zM8 2l6-1v7H8zM2 9h5v5l-5-1zM8 9h6v6l-6-1z" fill="#111"/>',
    search: '<g fill="none" stroke="#222" stroke-width="1.4"><circle cx="9" cy="6" r="4.5"/><path d="M6 9l-5 6"/></g>',
    taskview: '<g fill="none" stroke="#222" stroke-width="1.3"><path d="M2 5h7v6H2zM1 2h9M1 14h9M13 2v4M13 9v5"/></g><path d="M12 6h2v2h-2z"/>',
    mail: '<path d="M1 6l7-5 7 5v9H1z" fill="#1c6fb4"/><path d="M2 6h12v4l-6 3-6-3z" fill="#eaf5fc"/><path d="M1 7l7 5 7-5v8H1z" fill="#3198dc"/>',
    browser: '<circle cx="8" cy="8" r="7" fill="#2eafdf"/><path d="M12 8H5a3 3 0 1 1 6 1M5 8c0 4 5 5 7 2" stroke="#fff" stroke-width="1.6" fill="none"/>',
    folder: '<path d="M2 2h5l1 2h6v9H2z" fill="#eec24c"/><path d="M4 8h9v6h-3v-3H7v3H4z" fill="#39a1c5"/>',
    note: '<path d="M2 2h12v12H2z" fill="#333"/><path d="M8 8h6l-5 6H8z" fill="#f2cf2b"/>',
    cass: '<path d="M8 4C4 1 2 4 2 7s2 6 6 3" fill="none" stroke="#1c4678" stroke-width="2.6"/><path d="M9 10h2v3H9zM12 10h3v3h-3z" fill="#587"/>',
    qq: '<circle cx="8" cy="8" r="5.5" fill="#fff" stroke="#369ad0" stroke-width="2.5"/><path d="M10 10l5 4" stroke="#e6b43a" stroke-width="3"/><path d="M9 12l4-2" stroke="#4db567" stroke-width="2"/>',
    up: '<path d="M2 11l6-6 6 6" fill="none" stroke="#333" stroke-width="1.3"/>',
    qqTray: '<path d="M0 0h16v16H0z" fill="#fff"/><circle cx="8" cy="7" r="5" fill="none" stroke="#3ba5d8" stroke-width="2"/><path d="M10 10l4 3" stroke="#48b66b" stroke-width="2"/>',
    wechat: '<ellipse cx="6" cy="6" rx="6" ry="5" fill="#21b14b"/><ellipse cx="11" cy="10" rx="5" ry="4" fill="#e9f5ec"/><circle cx="4" cy="5" r="1"/><circle cx="8" cy="5" r="1"/>',
    power: '<path d="M4 5h10v7H4z" fill="#111"/><path d="M14 7h2v3h-2zM0 3h4v4H0z" fill="#222"/><path d="M8 7h4v3H8z" fill="#999"/>',
    speaker: '<path d="M1 6h3l4-4v12l-4-4H1z" fill="none" stroke="#222"/><path d="M10 5c2 2 2 4 0 6M12 3c3 3 3 7 0 10" fill="none" stroke="#555"/>',
    wifi: '<g fill="none" stroke="#222" stroke-width="1.3"><path d="M1 14C2 7 7 3 14 2M4 14c1-5 4-8 10-8M8 14c1-3 3-5 6-5"/></g><path d="M11 12h3v3h-3z"/>',
    pen: '<path d="M1 9c3-3 6-4 6-2s-5 4-4 7 5 0 6-3 4-4 5-2-1 3-3 2M8 8l5-7 2 2-6 6" fill="none" stroke="#222" stroke-width="1.3"/>',
    sogou: '<path d="M2 1l13 1-1 13-13-1z" fill="#ea5a31"/><path d="M12 4c-4-1-8 0-7 3s6 0 6 3-4 3-7 1" fill="none" stroke="#fff" stroke-width="2"/>',
    notice: '<path d="M1 2h14v10H9l-3 3v-3H1z" fill="#111"/><path d="M4 5h8M4 8h8" stroke="#fff"/>'
};

const running = ['browser', 'cass', 'qq'];

document.querySelectorAll('[data-icons]').forEach((box) => {
    box.dataset.icons.split(' ').forEach((name) => {
        if (name === '|') {
            box.insertAdjacentHTML('beforeend', '<span class="sep"></span>');
            return;
        }
        const svg = `<svg viewBox="0 0 16 16">${icons[name]}</svg>`;
        if (box.classList.contains('layer-state')) {
            box.insertAdjacentHTML('beforeend', svg);
            return;
        }
        const button = document.createElement('button');
        button.className = 'tool';
        if (name.startsWith('drop')) button.classList.add('narrow');
        if (box.classList.contains('tasks')) {
            button.className = 'task';
            if (running.includes(name)) button.classList.add('running');
            if (name === 'cass') button.classList.add('focused');
        }
        if (box.classList.contains('tray-icons')) {
            button.className = 'tray-item';
            if (name === 'pen' || name === 'sogou') button.classList.add('wide');
            if (name === 'pen') button.classList.add('lit');
        }
        button.setAttribute('aria-label', name);
        button.innerHTML = svg;
        box.appendChild(button);
    });
});

// Survey points: x, y, elevation
const points = [
    [371, 133, '133.22'], [429, 142, '133.34'], [475, 156, '133.88'], [500, 170, '133.87'], [529, 175, '133.82'],
    [351, 209, '132.69'], [450, 208, '133.64'], [407, 246, '133.21'], [333, 273, '132.81'], [495, 281, '133.07'],
    [415, 301, '133.12'], [445, 320, '133.88'], [300, 335, '133.34'], [530, 250, '133.06'], [560, 229, '133.28'],
    [574, 195, '133.60'], [582, 204, '133.02'], [613, 204, '133.30'], [660, 222, '133.23'], [712, 237, '131.90'],
    [790, 266, '131.80'], [602, 256, '126.72'], [563, 292, '126.60'], [595, 267, '126.40'], [588, 282, '126.86'],
    [593, 308, '126.60'], [590, 322, '126.03'], [617, 311, '126.94'], [614, 324, '126.32'], [626, 331, '126.40'],
    [638, 274, '126.88'], [637, 296, '126.88'], [646, 316, '126.30'], [667, 318, '126.84'], [653, 334, '126.99'],
    [684, 288, '126.95'], [682, 296, '126.91'], [679, 311, '126.97'], [681, 332, '126.53'], [722, 322, '126.12'],
    [747, 311, '128.88'], [716, 349, '124.80'], [763, 344, '130.99'], [776, 321, '124.88'], [525, 332, '126.96'],
    [543, 350, '126.60'], [366, 344, '133.18'], [402, 357, '132.39'], [283, 391, '133.90'], [344, 391, '132.38'],
    [288, 418, '133.94'], [252, 430, '133.38'], [254, 440, '132.98'], [468, 375, '134.33'], [493, 355, '130.66'],
    [508, 381, '130.06'], [520, 391, '128.44'], [487, 398, '130.08'], [497, 410, '130.82'], [435, 406, '134.03'],
    [443, 427, '133.84'], [462, 436, '133.61'], [405, 429, '133.90'], [436, 451, '134.28'], [467, 461, '134.21'],
    [371, 456, '134.02'], [371, 465, '124.77'], [388, 474, '134.18'], [402, 467, '134.38'], [408, 478, '134.33'],
    [333, 468, '133.08'], [410, 502, '134.54'], [456, 488, '134.93'], [465, 522, '134.68'], [530, 482, '133.38'],
    [525, 544, '133.99'], [562, 491, '133.87'], [602, 503, '124.90'], [544, 441, '130.70'], [569, 423, '127.80'],
    [568, 363, '126.13'], [591, 401, '123.90'], [620, 398, '123.91'], [635, 463, '133.47'], [653, 436, '123.81'],
    [664, 455, '122.87'], [683, 445, '124.73'], [717, 434, '124.80'], [710, 383, '123.83'], [708, 399, '123.84'],
    [713, 417, '123.80']
];

// Closely packed points that only carry a label
const packed = [
    [593, 270, '126.41'], [590, 273, '126.42'], [592, 271, '126.77'], [640, 280, '126.83'], [642, 282, '126.33'],
    [645, 280, '126.93'], [641, 286, '126.73'], [639, 284, '126.88'], [639, 289, '126.82'], [682, 299, '126.80'],
    [681, 302, '126.91'], [680, 327, '126.52'], [635, 320, '126.58'], [746, 317, '128.83'], [745, 320, '128.81'],
    [744, 325, '128.85'], [745, 328, '128.83'], [774, 325, '124.83'], [775, 330, '130.91'], [767, 339, '130.33'],
    [765, 342, '130.88'], [407, 469, '134.13']
];

// Triangle edges, written as runs of point numbers
const runs = [
    '0 5 8 12 51 52 70 71 73 75 77 85 86 87 42 20 19 18 17 15 4 3 2 1 0 2',
    '0 6 5 1', '5 7 6 2', '3 6 9 7 8 10 7', '8 46 10 9 13 6', '3 13 4 14 13 22 9 11 10 47 11 54 9 44',
    '11 53 47 46 12 49 46', '12 48 49 47 62 49 50 48 51 50 70 49 65', '47 59 53 54 45 44 54 55 53 57',
    '44 22 45 80 56 45 55 56 79', '55 57 59 60 57 58 55', '56 58 61 57', '58 78 56', '58 64 61 60 62 59',
    '60 63 61', '62 63 64 72 63', '62 65 70 66 65 68 62 69', '66 67 70', '66 68 69 67 71 69 72 71 68',
    '64 78 74 64', '78 76 79 78', '72 74 73 72', '74 75 76 74', '76 83 77 76', '79 80 81 79 83 81 82 83 84 82',
    '80 82 88', '82 89 88', '82 29', '82 34 88 38', '84 85 83', '84 86 89 84', '86 90 87 88', '90 89', '88 41 42 88', '38 41 39',
    '14 15 16 14 22 23 14 21 16 17', '17 21 18 30 14 24', '18 31', '18 35 19 40 20 43 42', '22 21 23 30 21',
    '22 25 24 22 26 25 27 24', '22 80 26 28 80 29 28 27 23 31 27 32', '30 31 32 33 31', '30 35 36 37 33 35',
    '24 23 39 30', '35 40 39 35', '36 39 37', '34 33 38 39 34 29 32 34 38 37', '39 43 40 42', '30 40'
];

const lines = runs.map((run) => {
    const coords = run.split(' ').map((n) => points[n][0] + ',' + points[n][1]).join(' ');
    return `<polyline points="${coords}"/>`;
}).join('');

const labels = points.concat(packed).map(([x, y, text]) => {
    return `<text x="${x + 1}" y="${y + 3}">${text}</text>`;
}).join('');

document.getElementById('canvas').innerHTML =
    `<g class="mesh">${lines}</g><g class="labels">${labels}</g>` +
    '<path class="window-box" d="M410.5 221.5h172v238h-172z"/>';
```
